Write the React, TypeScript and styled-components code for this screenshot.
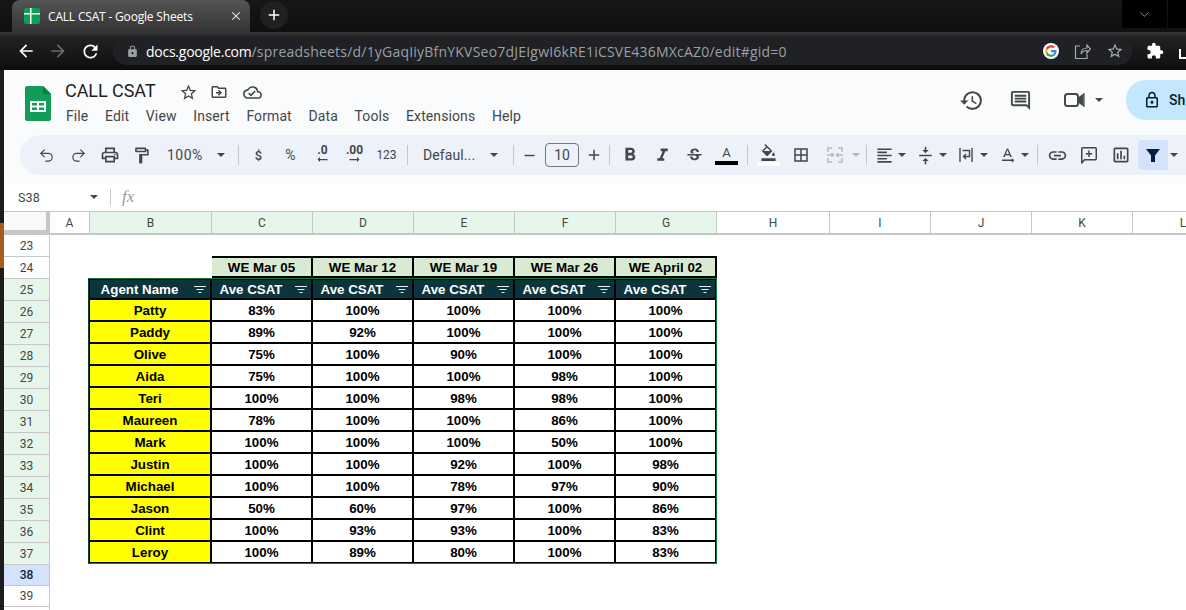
import React from "react";
import styled, { createGlobalStyle } from "styled-components";
import { Undo2, Redo2, ChevronDown } from "lucide-react";
import {
  MdArrowBack, MdRefresh, MdClose, MdAdd, MdLock, MdExtension, MdStarBorder, MdOutlineDriveFileMove,
  MdOutlineCloudDone, MdHistory, MdOutlineComment, MdOutlineLock, MdOutlinePrint,
  MdOutlineFormatPaint, MdFormatBold, MdFormatItalic, MdStrikethroughS, MdOutlineFormatColorFill,
  MdBorderAll, MdFormatAlignLeft, MdVerticalAlignCenter, MdTextRotationNone, MdLink,
  MdOutlineInsertChart, MdRemove, MdArrowRightAlt,
} from "react-icons/md";

const Global = createGlobalStyle`
  html, body { margin: 0; padding: 0; background: #fff; overflow: hidden; }
  * { box-sizing: border-box; }
`;

const Page = styled.div`
  width: 1186px; height: 610px; overflow: hidden; display: flex; flex-direction: column;
  font-family: Roboto, "Liberation Sans", sans-serif; background: #fff;
`;
const TabStrip = styled.div`
  height: 32px; flex: none; display: flex; align-items: flex-end;
  padding-left: 12px; background: linear-gradient(#161616, #101010);
`;
const Tab = styled.div`
  width: 238px; height: 32px; flex: none; display: flex; align-items: center; padding: 0 0 0 12px;
  background: linear-gradient(#555, #333); border-radius: 8px 8px 0 0; color: #fff;
  font: 12px "Open Sans", sans-serif;
`;
const TabIcon = styled.span`
  width: 16px; height: 16px; flex: none; margin-right: 8px; background: #0f9d58; border-radius: 2px;
  display: flex;
`;
const TabTitle = styled.span` flex: 1; letter-spacing: -0.18px; white-space: nowrap; `;
const TabClose = styled.span` display: flex; margin-right: 7px; color: #ddd; `;
const NewTab = styled.span`
  width: 28px; height: 28px; border-radius: 50%; margin: 0 0 2px 10px; background: #202020; color: #fff;
  display: flex; align-items: center; justify-content: center; align-self: center;
`;
const WindowButtons = styled.div`
  margin-left: auto; height: 28px; align-self: flex-start; display: flex; gap: 1px; color: #ddd;
`;
const WindowButton = styled.span<{ $w: number }>`
  width: ${p => p.$w}px; height: 28px; background: #000; display: flex; align-items: center; justify-content: center;
`;
const ChromeBar = styled.div`
  height: 38px; flex: none; display: flex; align-items: flex-start; padding: 5px 0 0 15px; color: #fff;
  background: linear-gradient(#383838 0, #222 12%, #141414 75%, #0c0c0c 100%);
`;
const NavButton = styled.span<{ $w: number; $dim?: boolean }>`
  width: ${p => p.$w}px; height: 28px; flex: none; display: flex; align-items: center; justify-content: center;
  color: ${p => (p.$dim ? "#6a6a6a" : "#fff")};
`;
const UrlBar = styled.div`
  width: 1019px; height: 28px; margin-left: 12px; flex: none; display: flex; align-items: center; padding-left: 13px;
  background: #202124; border-radius: 14px; font: 14px "Open Sans", sans-serif; color: #9aa0a6;
`;
const Host = styled.span` color: #fff; letter-spacing: -0.25px; `;
const UrlText = styled.span` margin-left: 7px; flex: 1; white-space: nowrap; letter-spacing: 0.21px; `;
const UrlIcons = styled.span` display: flex; align-items: center; gap: 15px; padding-right: 8px; color: #a8abb0; `;
const Puzzle = styled.span` margin-left: 14px; height: 28px; display: flex; align-items: center; color: #fff; `;
const Clipped = styled.span`
  margin: 12px 0 0 15px; width: 12px; height: 10px; border-left: 2px solid #fff; border-bottom: 2px solid #fff;
`;

const Body = styled.div` flex: 1; min-height: 0; display: flex; background: #000; `;
const Strip = styled.div`
  width: 4px; flex: none; background: linear-gradient(#1c1c1c 0 153px, #a65c1d 153px 198px, #1c1c1c 198px);
`;
const Main = styled.div` flex: 1; min-width: 0; display: flex; flex-direction: column; background: #fff; overflow: hidden; `;

const DocHeader = styled.div`
  height: 65px; flex: none; background: #f9fbfd; display: flex; padding: 16px 0 0 21px; color: #444746;
`;
const Logo = styled.span` display: flex; width: 26px; height: 35px; margin-right: 14px; flex: none; `;
const TitleBlock = styled.div` display: flex; flex-direction: column; `;
const TitleRow = styled.div` display: flex; align-items: center; height: 22px; `;
const DocTitle = styled.span` font-size: 18px; color: #1f1f1f; width: 113px; letter-spacing: -0.05px; line-height: 22px; margin-top: -13px; `;
const TitleIcon = styled.span<{ $w: number }>` width: ${p => p.$w}px; display: flex; justify-content: center; color: #444746; margin-top: -10px; `;
const Menu = styled.div` display: flex; gap: 16.7px; margin: -2px 0 0 1px; font-size: 14px; line-height: 20px; color: #444746; letter-spacing: 0.1px; `;
const HeaderRight = styled.div` margin-left: auto; display: flex; align-items: flex-start; color: #444746; `;
const HeaderIcon = styled.span<{ $w: number }>` width: ${p => p.$w}px; height: 28px; display: flex; align-items: center; justify-content: center; flex: none; `;
const ShareButton = styled.div`
  width: 90px; height: 40px; margin: -6px -30px 0 22px; padding-left: 17px; flex: none; background: #c2e7ff; border-radius: 20px 0 0 20px;
  display: flex; align-items: center; gap: 8px; font-size: 14px; font-weight: 500; color: #001d35;
`;

const ToolArea = styled.div` height: 48px; flex: none; background: #f9fbfd; padding-left: 16px; `;
const Tools = styled.div`
  height: 40px; width: 1200px; background: #edf2fa; border-radius: 20px; padding-left: 10px; display: flex; align-items: center; color: #444746;
`;
const Tool = styled.span<{ $w: number; $off?: boolean; $mr?: number }>`
  width: ${p => p.$w}px; height: 30px; flex: none; display: flex; align-items: center; justify-content: center;
  margin-right: ${p => p.$mr ?? 0}px;
  color: ${p => (p.$off ? "#b6b9be" : "#444746")}; font-size: 12px;
`;
const Drop = styled.span<{ $off?: boolean }>`
  width: 0; height: 0; border: 4px solid transparent; border-top: 4.5px solid ${p => (p.$off ? "#b6b9be" : "#444746")}; border-bottom: 0;
`;
const Sep = styled.span<{ $ml?: number; $mr?: number }>`
  width: 1px; height: 20px; flex: none; background: #c7c7c7; margin: 0 ${p => p.$mr ?? 0}px 0 ${p => p.$ml ?? 0}px;
`;
const ToolText = styled.span<{ $w: number; $ls?: number }>` width: ${p => p.$w}px; flex: none; font-size: 14px; color: #444746; white-space: nowrap; letter-spacing: ${p => p.$ls ?? 0.1}px; `;
const Symbol = styled.span<{ $size: number; $weight?: number }>` font-size: ${p => p.$size}px; font-weight: ${p => p.$weight ?? 400}; `;
const Decimal = styled.span` display: flex; flex-direction: column; align-items: center; font: 700 12px/11px Roboto, sans-serif; color: #444746; margin-top: -2px; `;
const Arrowlet = styled.span<{ $flip?: boolean }>` display: flex; height: 8px; align-items: center; transform: ${p => (p.$flip ? "scaleX(-1)" : "none")}; `;
const FontSize = styled.span`
  width: 34px; height: 24px; flex: none; border: 1px solid #747775; border-radius: 4px; display: flex; align-items: center; justify-content: center;
  font-size: 14px; color: #444746;
`;
const ColorTool = styled.span` display: flex; flex-direction: column; align-items: center; width: 23px; font-size: 13px; line-height: 14px; color: #444746; `;
const ColorBar = styled.span<{ $c: string }>` width: 23px; height: 4px; background: ${p => p.$c}; margin-top: 1px; `;
const FilterTool = styled.span`
  width: 30px; height: 30px; flex: none; margin-left: 1px; background: #d3e3fd; border-radius: 4px 0 0 4px; display: flex; align-items: center; justify-content: center;
`;

const FormulaBar = styled.div`
  height: 28px; flex: none; background: #fff; display: flex; align-items: center; font-size: 12.5px; color: #444746; padding-left: 14px;
`;
const CellRef = styled.span` width: 72px; letter-spacing: .1px; `;
const FxSep = styled.span` width: 1px; height: 17px; background: #c7c7c7; margin: 0 11px 0 12px; `;
const Fx = styled.span` font: italic 17px "Liberation Serif", serif; color: #9a9a9a; `;

const ColRow = styled.div` height: 24px; flex: none; display: flex; border-top: 1px solid #c7c7c7; border-bottom: 2px solid #c4c7c5; `;
const Corner = styled.span` width: 46px; flex: none; background: #f8f9fa; border-right: 4px solid #c4c7c5; border-bottom: 3px solid #c4c7c5; `;
const ColCell = styled.span<{ $w: number; $on: boolean }>`
  width: ${p => p.$w}px; flex: none; background: ${p => (p.$on ? "#e6f6ea" : "#fff")}; border-right: 1px solid #c7c7c7;
  display: flex; align-items: center; justify-content: center; font-size: 12px; color: #444746;
`;
const SheetBody = styled.div` flex: 1; display: flex; min-height: 0; `;
const RowHeads = styled.div` width: 46px; flex: none; border-right: 1px solid #c7c7c7; `;
const RowHead = styled.div<{ $h: number; $kind: string }>`
  height: ${p => p.$h}px; border-bottom: 1px solid #c7c7c7; display: flex; align-items: center; justify-content: center; font-size: 12px;
  background: ${p => (p.$kind === "sel" ? "#d3e3fd" : p.$kind === "on" ? "#e6f6ea" : "#fff")};
  color: ${p => (p.$kind === "sel" ? "#0b1f40" : "#444746")};
  font-weight: ${p => (p.$kind === "sel" ? 500 : 400)};
`;
const Canvas = styled.div` flex: 1; padding: 21px 0 0 38px; `;
const TableWrap = styled.div` position: relative; width: 629px; `;
const Table = styled.div`
  display: grid; grid-template-columns: 124px repeat(5, 101px); grid-auto-rows: 22px;
  font: 700 13.33px/1 "Liberation Sans", Arial, sans-serif; color: #000;
`;
const Cell = styled.div<{ $kind: string; $top?: boolean; $left?: boolean }>`
  display: flex; align-items: center; justify-content: center; position: relative; padding-top: 2px;
  border-right: 2px solid #000; border-bottom: 2px solid #000;
  border-top: ${p => (p.$top ? "2px solid #000" : "0")};
  border-left: ${p => (p.$left ? "2px solid #000" : "0")};
  background: ${p => ({ week: "#d9ead3", head: "#0c343d", name: "#ffff00", val: "#fff" } as Record<string, string>)[p.$kind]};
  color: ${p => (p.$kind === "head" ? "#fff" : "#000")};
  ${p => (p.$kind === "head" ? "padding-right: 21px;" : "")}
`;
const Blank = styled.div``;
const FilterGlyph = styled.svg` position: absolute; right: 4px; top: 6px; `;
const FilterRange = styled.div` position: absolute; left: 0; right: 0; top: 22px; bottom: 0; border: 1px solid #0b7a3b; border-left-color: #0d3d2a; pointer-events: none; `;

const columns: [string, number, boolean][] = [
  ["A", 40, false], ["B", 122, true], ["C", 101, true], ["D", 101, true], ["E", 101, true], ["F", 101, true], ["G", 101, true],
  ["H", 113, false], ["I", 101, false], ["J", 101, false], ["K", 101, false], ["L", 101, false],
];
const weeks = ["WE Mar 05", "WE Mar 12", "WE Mar 19", "WE Mar 26", "WE April 02"];
const agents: [string, string, string, string, string, string][] = [
  ["Patty", "83%", "100%", "100%", "100%", "100%"],
  ["Paddy", "89%", "92%", "100%", "100%", "100%"],
  ["Olive", "75%", "100%", "90%", "100%", "100%"],
  ["Aida", "75%", "100%", "100%", "98%", "100%"],
  ["Teri", "100%", "100%", "98%", "98%", "100%"],
  ["Maureen", "78%", "100%", "100%", "86%", "100%"],
  ["Mark", "100%", "100%", "100%", "50%", "100%"],
  ["Justin", "100%", "100%", "92%", "100%", "98%"],
  ["Michael", "100%", "100%", "78%", "97%", "90%"],
  ["Jason", "50%", "60%", "97%", "100%", "86%"],
  ["Clint", "100%", "93%", "93%", "100%", "83%"],
  ["Leroy", "100%", "89%", "80%", "100%", "83%"],
];
const menu = ["File", "Edit", "View", "Insert", "Format", "Data", "Tools", "Extensions", "Help"];
const rows = [23, 24, 25, 26, 27, 28, 29, 30, 31, 32, 33, 34, 35, 36, 37, 38, 39];

const Filter3 = () => (
  <FilterGlyph width="12" height="8" viewBox="0 0 12 8">
    <path d="M0 .5h12M2.500 3.500h7M4.500 6.500h3" stroke="#e8eeee" strokeWidth="1" fill="none" />
  </FilterGlyph>
);
const SheetsLogo = () => (
  <svg width="26" height="35" viewBox="0 0 26 35">
    <path d="M2 0h16l8 8v25a2 2 0 0 1-2 2H2a2 2 0 0 1-2-2V2a2 2 0 0 1 2-2z" fill="#0f9d58" />
    <path d="M18 0l8 8h-8z" fill="#0b7a44" />
    <path d="M5 15h16v11H5zM7 17v2.500h5V17zm7 0v2.500h5V17zm-7 4.500V24h5v-2.500zm7 0V24h5v-2.500z" fill="#fff" fillRule="evenodd" />
  </svg>
);
const GoogleG = () => (
  <svg width="16" height="16" viewBox="0 0 48 48" style={{ background: "#fff", borderRadius: "50%", padding: 2 }}>
    <path fill="#EA4335" d="M24 9.500c3.500 0 6.700 1.200 9.200 3.600l6.900-6.900C35.900 2.400 30.500 0 24 0 14.600 0 6.500 5.400 2.600 13.200l8 6.200C12.500 13.700 17.800 9.500 24 9.500z" />
    <path fill="#4285F4" d="M46.900 24.500c0-1.600-.1-3.100-.4-4.500H24v9h12.900c-.6 3-2.200 5.500-4.800 7.200l7.700 6c4.500-4.200 7.100-10.300 7.100-17.700z" />
    <path fill="#FBBC05" d="M10.500 28.600c-.5-1.500-.8-3-.8-4.600s.3-3.200.8-4.600l-8-6.200C.9 16.500 0 20.100 0 24s.9 7.500 2.600 10.800z" />
    <path fill="#34A853" d="M24 48c6.500 0 11.900-2.100 15.900-5.800l-7.700-6c-2.200 1.400-4.900 2.300-8.100 2.300-6.200 0-11.500-4.200-13.400-9.900l-8 6.200C6.500 42.600 14.600 48 24 48z" />
  </svg>
);
const ShareIcon = () => (
  <svg width="17" height="17" viewBox="0 0 17 17" fill="none" stroke="currentColor" strokeWidth="1.200">
    <path d="M6 3H1.500v12.500H13V11M7 11c0-4 3-6 6-6V2l3.500 4-3.500 4V7.500C10 7.500 8 9 7 11z" />
  </svg>
);
const VideoIcon = () => (
  <svg width="21" height="16" viewBox="0 0 21 16" fill="none" stroke="#444746" strokeWidth="2">
    <rect x="1" y="2" width="13" height="12" rx="2.500" />
    <path d="M14 6.500l5.500-4v11l-5.500-4z" fill="#444746" stroke="none" />
    <path d="M15 5.500L20 2v12l-5-3.500" strokeWidth="1.200" />
  </svg>
);
const AddCommentIcon = () => (
  <svg width="18" height="18" viewBox="0 0 18 18" fill="none" stroke="#444746" strokeWidth="1.500">
    <path d="M1.750 17V2.750a1 1 0 0 1 1-1h12.500a1 1 0 0 1 1 1v10a1 1 0 0 1-1 1H4.500z" strokeLinejoin="round" />
    <path d="M9 4.500v6.500M5.750 7.750h6.500" />
  </svg>
);
const FunnelIcon = () => (
  <svg width="20" height="20" viewBox="0 0 20 20"><path d="M3 4h14l-5 6.500V17H8v-6.500z" fill="#041e49" /></svg>
);
const MergeIcon = () => (
  <svg width="18" height="18" viewBox="0 0 18 18" fill="none" stroke="#b6b9be" strokeWidth="1.500">
    <path d="M6 2H2v4M2 8v2M2 12v4h4M12 2h4v4M16 8v2M16 12v4h-4M3 9h4M5.500 7L7.500 9l-2 2M15 9h-4M12.500 7l-2 2 2 2" />
  </svg>
);
const WrapIcon = () => (
  <svg width="18" height="18" viewBox="0 0 18 18" fill="none" stroke="#444746" strokeWidth="1.400">
    <path d="M3 2v14M15 2v14M5.500 4.500h7v6H7M9 8l-2.500 2.500L9 13" />
  </svg>
);

const Dec = ({ t, back }: { t: string; back: boolean }) => (
  <Decimal>
    {t}
    <Arrowlet $flip={back}><MdArrowRightAlt size={15} /></Arrowlet>
  </Decimal>
);

export default function App() {
  return (
    <Page>
      <Global />
      <TabStrip>
        <Tab>
          <TabIcon>
            <svg width="16" height="16" viewBox="0 0 16 16"><path d="M6 0h1.500v5H16v1.500H7.500V16H6V6.500H0V5h6z" fill="#fff" /></svg>
          </TabIcon>
          <TabTitle>CALL CSAT - Google Sheets</TabTitle>
          <TabClose><MdClose size={14} /></TabClose>
        </Tab>
        <NewTab><MdAdd size={18} /></NewTab>
        <WindowButtons>
          <WindowButton $w={45}><ChevronDown size={15} strokeWidth={1} /></WindowButton>
          <WindowButton $w={18} />
        </WindowButtons>
      </TabStrip>
      <ChromeBar>
        <NavButton $w={22}><MdArrowBack size={20} /></NavButton>
        <NavButton $w={42} $dim><MdArrowBack size={20} style={{ transform: "scaleX(-1)" }} /></NavButton>
        <NavButton $w={22}><MdRefresh size={21} /></NavButton>
        <UrlBar>
          <MdLock size={13} />
          <UrlText><Host>docs.google.com</Host>/spreadsheets/d/1yGaqIiyBfnYKVSeo7dJEIgwI6kRE1iCSVE436MXcAZ0/edit#gid=0</UrlText>
          <UrlIcons><GoogleG /><ShareIcon /><MdStarBorder size={18} /></UrlIcons>
        </UrlBar>
        <Puzzle><MdExtension size={18} /></Puzzle>
        <Clipped />
      </ChromeBar>
      <Body>
        <Strip />
        <Main>
          <DocHeader>
            <Logo><SheetsLogo /></Logo>
            <TitleBlock>
              <TitleRow>
                <DocTitle>CALL CSAT</DocTitle>
                <TitleIcon $w={20}><MdStarBorder size={19} /></TitleIcon>
                <TitleIcon $w={42}><MdOutlineDriveFileMove size={18} /></TitleIcon>
                <TitleIcon $w={24}><MdOutlineCloudDone size={19} /></TitleIcon>
              </TitleRow>
              <Menu>{menu.map(m => <span key={m}>{m}</span>)}</Menu>
            </TitleBlock>
            <HeaderRight>
              <HeaderIcon $w={30}><MdHistory size={25} /></HeaderIcon>
              <HeaderIcon $w={68}><MdOutlineComment size={23} /></HeaderIcon>
              <HeaderIcon $w={40}><VideoIcon /></HeaderIcon>
              <HeaderIcon $w={10}><Drop /></HeaderIcon>
              <ShareButton><MdOutlineLock size={18} />Sh</ShareButton>
            </HeaderRight>
          </DocHeader>
          <ToolArea>
            <Tools>
              <Tool $w={32}><Undo2 size={17} strokeWidth={1.7} /></Tool>
              <Tool $w={32}><Redo2 size={17} strokeWidth={1.7} /></Tool>
              <Tool $w={32}><MdOutlinePrint size={20} /></Tool>
              <Tool $w={31}><MdOutlineFormatPaint size={19} /></Tool>
              <Tool $w={10} />
              <ToolText $w={43} $ls={0.5}>100%</ToolText>
              <Tool $w={22}><Drop /></Tool>
              <Sep $ml={6} />
              <Tool $w={39}><Symbol $size={13} $weight={500}>$</Symbol></Tool>
              <Tool $w={25}><Symbol $size={14}>%</Symbol></Tool>
              <Tool $w={39}><Dec t=".0" back /></Tool>
              <Tool $w={25}><Dec t=".00" back={false} /></Tool>
              <Tool $w={39}>123</Tool>
              <Sep $ml={1} $mr={15} />
              <ToolText $w={60}>Defaul...</ToolText>
              <Tool $w={22}><Drop /></Tool>
              <Sep $ml={8} />
              <Tool $w={31}><MdRemove size={17} /></Tool>
              <FontSize>10</FontSize>
              <Tool $w={30}><MdAdd size={18} /></Tool>
              <Sep $mr={4} />
              <Tool $w={32}><MdFormatBold size={22} /></Tool>
              <Tool $w={32}><MdFormatItalic size={21} /></Tool>
              <Tool $w={32}><MdStrikethroughS size={19} /></Tool>
              <Tool $w={33}><ColorTool>A<ColorBar $c="#000" /></ColorTool></Tool>
              <Sep $ml={4} $mr={9} />
              <Tool $w={23}><ColorTool><MdOutlineFormatColorFill size={17} /><ColorBar $c="#fff" /></ColorTool></Tool>
              <Tool $w={42}><MdBorderAll size={18} /></Tool>
              <Tool $w={26}><MergeIcon /></Tool>
              <Tool $w={16}><Drop $off /></Tool>
              <Sep $ml={2} $mr={3} />
              <Tool $w={28}><MdFormatAlignLeft size={19} /></Tool>
              <Tool $w={8} $mr={5}><Drop /></Tool>
              <Tool $w={28}><MdVerticalAlignCenter size={19} /></Tool>
              <Tool $w={8} $mr={5}><Drop /></Tool>
              <Tool $w={28}><WrapIcon /></Tool>
              <Tool $w={8} $mr={5}><Drop /></Tool>
              <Tool $w={28}><MdTextRotationNone size={19} /></Tool>
              <Tool $w={8}><Drop /></Tool>
              <Sep $ml={8} $mr={3} />
              <Tool $w={32}><MdLink size={21} /></Tool>
              <Tool $w={32}><AddCommentIcon /></Tool>
              <Tool $w={32}><MdOutlineInsertChart size={20} /></Tool>
              <FilterTool><FunnelIcon /></FilterTool>
              <Tool $w={12}><Drop /></Tool>
            </Tools>
          </ToolArea>
          <FormulaBar>
            <CellRef>S38</CellRef>
            <Drop />
            <FxSep />
            <Fx>fx</Fx>
          </FormulaBar>
          <ColRow>
            <Corner />
            {columns.map(([n, w, on]) => <ColCell key={n} $w={w} $on={on}>{n}</ColCell>)}
          </ColRow>
          <SheetBody>
            <RowHeads>
              {rows.map(r => (
                <RowHead key={r} $h={r >= 38 ? 21 : 22} $kind={r === 38 ? "sel" : r >= 25 && r <= 37 ? "on" : "off"}>{r}</RowHead>
              ))}
            </RowHeads>
            <Canvas>
              <TableWrap>
                <Table>
                  <Blank />
                  {weeks.map(w => <Cell key={w} $kind="week" $top>{w}</Cell>)}
                  <Cell $kind="head" $left $top>Agent Name<Filter3 /></Cell>
                  {weeks.map(w => <Cell key={w} $kind="head" $top>Ave CSAT<Filter3 /></Cell>)}
                  {agents.map(([name, ...vals]) => (
                    <React.Fragment key={name}>
                      <Cell $kind="name" $left>{name}</Cell>
                      {vals.map((v, i) => <Cell key={i} $kind="val">{v}</Cell>)}
                    </React.Fragment>
                  ))}
                </Table>
                <FilterRange />
              </TableWrap>
            </Canvas>
          </SheetBody>
        </Main>
      </Body>
    </Page>
  );
}
